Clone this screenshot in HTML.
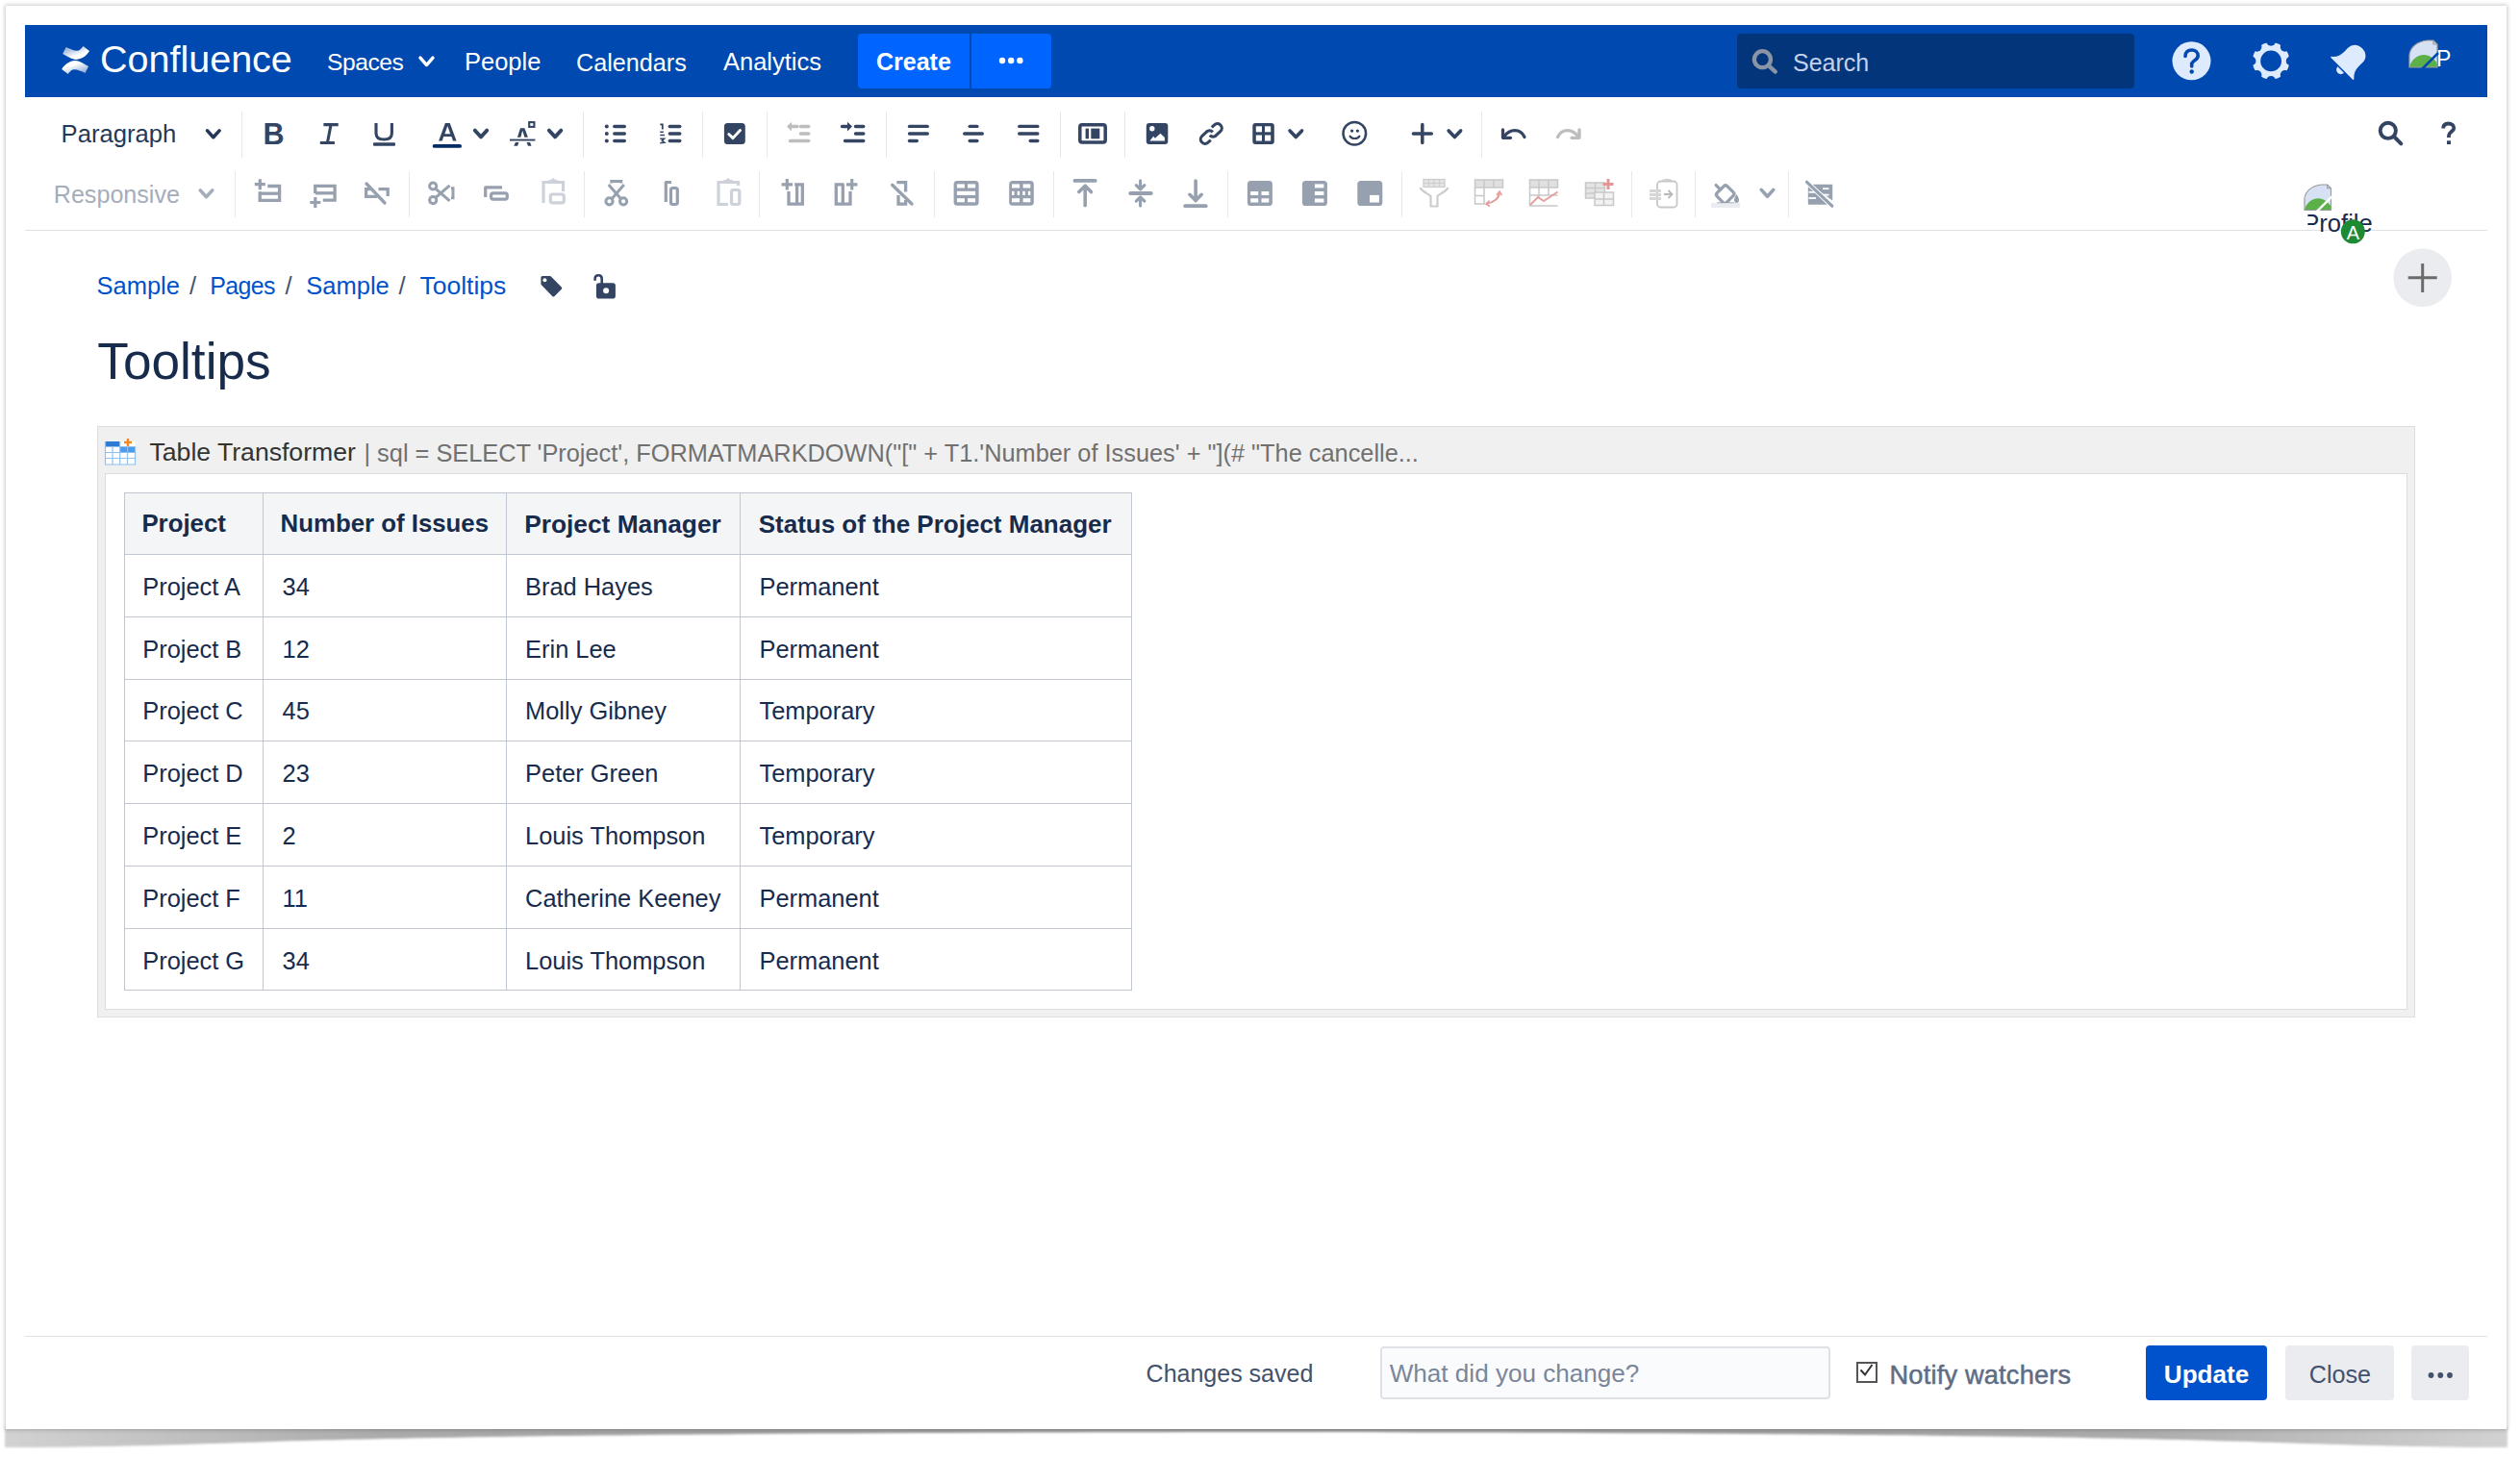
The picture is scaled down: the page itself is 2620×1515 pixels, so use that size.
<!DOCTYPE html>
<html><head><meta charset="utf-8"><title>Confluence - Tooltips</title>
<style>
html,body{margin:0;padding:0;background:#fff;width:2620px;height:1515px;overflow:hidden;font-family:"Liberation Sans",sans-serif}
.t{position:absolute;white-space:pre;line-height:1}
</style></head><body>
<svg style="position:absolute;left:0;top:0" width="2620" height="1515">
<defs>
<linearGradient id="shg" x1="0" x2="1" y1="0" y2="0">
<stop offset="0" stop-color="#d2d2d2"/><stop offset="0.15" stop-color="#ababab"/><stop offset="0.3" stop-color="#a0a0a0"/>
<stop offset="0.5" stop-color="#9c9c9c"/><stop offset="0.7" stop-color="#a0a0a0"/><stop offset="0.85" stop-color="#ababab"/><stop offset="1" stop-color="#d2d2d2"/></linearGradient>
<filter id="blur1" x="-1%" y="-50%" width="102%" height="200%"><feGaussianBlur stdDeviation="1.3"/></filter>
</defs>
<path d="M5,1484 L2607,1484 L2607,1505 C2560,1505 2480,1504 2370,1500 C2200,1494 1900,1490 1306,1489 C700,1490 420,1494 250,1500 C140,1504 60,1505 5,1505 Z" fill="url(#shg)" filter="url(#blur1)"/>
</svg>

<div style="position:absolute;left:6px;top:6px;width:2600px;height:1480px;background:#fff;box-shadow:0 0 4px 1px rgba(0,0,0,0.22);"></div>

<div style="position:absolute;left:26px;top:26px;width:2560px;height:75px;background:#0049B0"></div><div style="position:absolute;left:892px;top:35px;width:201px;height:57px;background:#0065FF;border-radius:4px"></div><div style="position:absolute;left:1008px;top:35px;width:2px;height:57px;background:#0049B0"></div><div style="position:absolute;left:1806px;top:35px;width:413px;height:57px;background:#03357B;border-radius:4px"></div>
<div style="position:absolute;left:26px;top:239px;width:2560px;height:1px;background:#DFE1E6"></div><div style="position:absolute;left:251px;top:116px;width:1px;height:48px;background:#E6E8EC"></div><div style="position:absolute;left:606px;top:116px;width:1px;height:48px;background:#E6E8EC"></div><div style="position:absolute;left:730px;top:116px;width:1px;height:48px;background:#E6E8EC"></div><div style="position:absolute;left:797px;top:116px;width:1px;height:48px;background:#E6E8EC"></div><div style="position:absolute;left:921px;top:116px;width:1px;height:48px;background:#E6E8EC"></div><div style="position:absolute;left:1102px;top:116px;width:1px;height:48px;background:#E6E8EC"></div><div style="position:absolute;left:1169px;top:116px;width:1px;height:48px;background:#E6E8EC"></div><div style="position:absolute;left:1540px;top:116px;width:1px;height:48px;background:#E6E8EC"></div><div style="position:absolute;left:244px;top:178px;width:1px;height:48px;background:#E6E8EC"></div><div style="position:absolute;left:425px;top:178px;width:1px;height:48px;background:#E6E8EC"></div><div style="position:absolute;left:607px;top:178px;width:1px;height:48px;background:#E6E8EC"></div><div style="position:absolute;left:789px;top:178px;width:1px;height:48px;background:#E6E8EC"></div><div style="position:absolute;left:971px;top:178px;width:1px;height:48px;background:#E6E8EC"></div><div style="position:absolute;left:1095px;top:178px;width:1px;height:48px;background:#E6E8EC"></div><div style="position:absolute;left:1276px;top:178px;width:1px;height:48px;background:#E6E8EC"></div><div style="position:absolute;left:1457px;top:178px;width:1px;height:48px;background:#E6E8EC"></div><div style="position:absolute;left:1696px;top:178px;width:1px;height:48px;background:#E6E8EC"></div><div style="position:absolute;left:1762px;top:178px;width:1px;height:48px;background:#E6E8EC"></div><div style="position:absolute;left:1859px;top:178px;width:1px;height:48px;background:#E6E8EC"></div>
<div style="position:absolute;left:101px;top:443px;width:2408px;height:613px;background:#F0F0F0;border:1px solid #DDDDDD"></div><div style="position:absolute;left:109px;top:492px;width:2392px;height:556px;background:#fff;border:1px solid #DDDDDD"></div>
<div style="position:absolute;left:129px;top:511.5px;width:1048px;height:65px;background:#F4F5F7"></div><div style="position:absolute;left:129.0px;top:511.5px;width:1.3px;height:518.5px;background:#C1C7D0"></div><div style="position:absolute;left:272.8px;top:511.5px;width:1.3px;height:518.5px;background:#C1C7D0"></div><div style="position:absolute;left:525.8px;top:511.5px;width:1.3px;height:518.5px;background:#C1C7D0"></div><div style="position:absolute;left:768.7px;top:511.5px;width:1.3px;height:518.5px;background:#C1C7D0"></div><div style="position:absolute;left:1175.7px;top:511.5px;width:1.3px;height:518.5px;background:#C1C7D0"></div><div style="position:absolute;left:129px;top:511.5px;width:1048px;height:1.3px;background:#C1C7D0"></div><div style="position:absolute;left:129px;top:576.1px;width:1048px;height:1.3px;background:#C1C7D0"></div><div style="position:absolute;left:129px;top:640.8px;width:1048px;height:1.3px;background:#C1C7D0"></div><div style="position:absolute;left:129px;top:705.5px;width:1048px;height:1.3px;background:#C1C7D0"></div><div style="position:absolute;left:129px;top:770.1px;width:1048px;height:1.3px;background:#C1C7D0"></div><div style="position:absolute;left:129px;top:834.8px;width:1048px;height:1.3px;background:#C1C7D0"></div><div style="position:absolute;left:129px;top:900.0px;width:1048px;height:1.3px;background:#C1C7D0"></div><div style="position:absolute;left:129px;top:964.7px;width:1048px;height:1.3px;background:#C1C7D0"></div><div style="position:absolute;left:129px;top:1029.0px;width:1048px;height:1.3px;background:#C1C7D0"></div>
<div style="position:absolute;left:26px;top:1389px;width:2560px;height:1.3px;background:#DFE1E6"></div><div style="position:absolute;left:1435px;top:1399.5px;width:463.5px;height:51.5px;background:#FAFBFC;border:2px solid #DFE1E6;border-radius:4px"></div><div style="position:absolute;left:1930px;top:1416px;width:17.5px;height:17.5px;border:2px solid #555;background:#fff"></div><div style="position:absolute;left:2231px;top:1399px;width:126px;height:56.5px;background:#0052CC;border-radius:4px"></div><div style="position:absolute;left:2376px;top:1399px;width:113px;height:56.5px;background:#EBECF0;border-radius:4px"></div><div style="position:absolute;left:2507px;top:1399px;width:60px;height:56.5px;background:#EBECF0;border-radius:4px"></div>
<div class="t" style="left:104.0px;top:42.4px;font-size:39.5px;color:#fff;font-weight:400;font-family:'Liberation Sans', sans-serif;">Confluence</div><div class="t" style="left:340.0px;top:53.1px;font-size:24.6px;color:#fff;font-weight:400;font-family:'Liberation Sans', sans-serif;letter-spacing:-0.45px">Spaces</div><div class="t" style="left:483.0px;top:52.3px;font-size:25.5px;color:#fff;font-weight:400;font-family:'Liberation Sans', sans-serif;">People</div><div class="t" style="left:599.0px;top:52.6px;font-size:25.2px;color:#fff;font-weight:400;font-family:'Liberation Sans', sans-serif;">Calendars</div><div class="t" style="left:752.0px;top:52.3px;font-size:25.5px;color:#fff;font-weight:400;font-family:'Liberation Sans', sans-serif;">Analytics</div><div class="t" style="left:911.0px;top:51.8px;font-size:25px;color:#fff;font-weight:700;font-family:'Liberation Sans', sans-serif;">Create</div><div class="t" style="left:1864.0px;top:52.8px;font-size:25px;color:#C3D2EC;font-weight:400;font-family:'Liberation Sans', sans-serif;">Search</div><div class="t" style="left:2533.0px;top:49.9px;font-size:23px;color:#fff;font-weight:400;font-family:'Liberation Sans', sans-serif;">P</div><div class="t" style="left:63.6px;top:127.2px;font-size:25.6px;color:#253858;font-weight:400;font-family:'Liberation Sans', sans-serif;">Paragraph</div><div class="t" style="left:55.8px;top:189.7px;font-size:25.1px;color:#A5ADBA;font-weight:400;font-family:'Liberation Sans', sans-serif;">Responsive</div><div class="t" style="left:2394.2px;top:219.8px;font-size:25.6px;color:#172B4D;font-weight:400;font-family:'Liberation Sans', sans-serif;clip-path:inset(0 0 0 5.2px)">Profile</div><div class="t" style="left:100.5px;top:284.7px;font-size:25.5px;color:#0052CC;font-weight:400;font-family:'Liberation Sans', sans-serif;">Sample</div><div class="t" style="left:197.0px;top:284.7px;font-size:25.5px;color:#42526E;font-weight:400;font-family:'Liberation Sans', sans-serif;">/</div><div class="t" style="left:218.3px;top:285.2px;font-size:24.9px;color:#0052CC;font-weight:400;font-family:'Liberation Sans', sans-serif;letter-spacing:-0.6px">Pages</div><div class="t" style="left:296.6px;top:284.7px;font-size:25.5px;color:#42526E;font-weight:400;font-family:'Liberation Sans', sans-serif;">/</div><div class="t" style="left:318.3px;top:284.7px;font-size:25.5px;color:#0052CC;font-weight:400;font-family:'Liberation Sans', sans-serif;">Sample</div><div class="t" style="left:414.6px;top:284.7px;font-size:25.5px;color:#42526E;font-weight:400;font-family:'Liberation Sans', sans-serif;">/</div><div class="t" style="left:436.5px;top:283.9px;font-size:26.5px;color:#0052CC;font-weight:400;font-family:'Liberation Sans', sans-serif;">Tooltips</div><div class="t" style="left:101.3px;top:348.8px;font-size:53.2px;color:#172B4D;font-weight:400;font-family:'Liberation Sans', sans-serif;">Tooltips</div><div class="t" style="left:155.5px;top:457.4px;font-size:26.6px;color:#333333;font-weight:400;font-family:'Liberation Sans', sans-serif;">Table Transformer</div><div class="t" style="left:378.5px;top:458.5px;font-size:25.35px;color:#707070;font-weight:400;font-family:'Liberation Sans', sans-serif;">| sql = SELECT 'Project', FORMATMARKDOWN("[" + T1.'Number of Issues' + "](# "The cancelle...</div><div class="t" style="left:147.4px;top:532.1px;font-size:25.8px;color:#172B4D;font-weight:700;font-family:'Liberation Sans', sans-serif;">Project</div><div class="t" style="left:291.6px;top:532.1px;font-size:25.8px;color:#172B4D;font-weight:700;font-family:'Liberation Sans', sans-serif;">Number of Issues</div><div class="t" style="left:545.2px;top:531.6px;font-size:26.3px;color:#172B4D;font-weight:700;font-family:'Liberation Sans', sans-serif;">Project Manager</div><div class="t" style="left:788.7px;top:531.9px;font-size:26.0px;color:#172B4D;font-weight:700;font-family:'Liberation Sans', sans-serif;">Status of the Project Manager</div><div class="t" style="left:148.3px;top:597.7px;font-size:25.4px;color:#172B4D;font-weight:400;font-family:'Liberation Sans', sans-serif;">Project A</div><div class="t" style="left:293.6px;top:597.7px;font-size:25.4px;color:#172B4D;font-weight:400;font-family:'Liberation Sans', sans-serif;">34</div><div class="t" style="left:546.1px;top:597.7px;font-size:25.4px;color:#172B4D;font-weight:400;font-family:'Liberation Sans', sans-serif;">Brad Hayes</div><div class="t" style="left:789.5px;top:597.7px;font-size:25.4px;color:#172B4D;font-weight:400;font-family:'Liberation Sans', sans-serif;">Permanent</div><div class="t" style="left:148.3px;top:662.5px;font-size:25.4px;color:#172B4D;font-weight:400;font-family:'Liberation Sans', sans-serif;">Project B</div><div class="t" style="left:293.6px;top:662.5px;font-size:25.4px;color:#172B4D;font-weight:400;font-family:'Liberation Sans', sans-serif;">12</div><div class="t" style="left:546.1px;top:662.5px;font-size:25.4px;color:#172B4D;font-weight:400;font-family:'Liberation Sans', sans-serif;">Erin Lee</div><div class="t" style="left:789.5px;top:662.5px;font-size:25.4px;color:#172B4D;font-weight:400;font-family:'Liberation Sans', sans-serif;">Permanent</div><div class="t" style="left:148.3px;top:727.3px;font-size:25.4px;color:#172B4D;font-weight:400;font-family:'Liberation Sans', sans-serif;">Project C</div><div class="t" style="left:293.6px;top:727.3px;font-size:25.4px;color:#172B4D;font-weight:400;font-family:'Liberation Sans', sans-serif;">45</div><div class="t" style="left:546.1px;top:727.3px;font-size:25.4px;color:#172B4D;font-weight:400;font-family:'Liberation Sans', sans-serif;">Molly Gibney</div><div class="t" style="left:789.5px;top:727.3px;font-size:25.4px;color:#172B4D;font-weight:400;font-family:'Liberation Sans', sans-serif;">Temporary</div><div class="t" style="left:148.3px;top:792.1px;font-size:25.4px;color:#172B4D;font-weight:400;font-family:'Liberation Sans', sans-serif;">Project D</div><div class="t" style="left:293.6px;top:792.1px;font-size:25.4px;color:#172B4D;font-weight:400;font-family:'Liberation Sans', sans-serif;">23</div><div class="t" style="left:546.1px;top:792.1px;font-size:25.4px;color:#172B4D;font-weight:400;font-family:'Liberation Sans', sans-serif;">Peter Green</div><div class="t" style="left:789.5px;top:792.1px;font-size:25.4px;color:#172B4D;font-weight:400;font-family:'Liberation Sans', sans-serif;">Temporary</div><div class="t" style="left:148.3px;top:856.9px;font-size:25.4px;color:#172B4D;font-weight:400;font-family:'Liberation Sans', sans-serif;">Project E</div><div class="t" style="left:293.6px;top:856.9px;font-size:25.4px;color:#172B4D;font-weight:400;font-family:'Liberation Sans', sans-serif;">2</div><div class="t" style="left:546.1px;top:856.9px;font-size:25.4px;color:#172B4D;font-weight:400;font-family:'Liberation Sans', sans-serif;">Louis Thompson</div><div class="t" style="left:789.5px;top:856.9px;font-size:25.4px;color:#172B4D;font-weight:400;font-family:'Liberation Sans', sans-serif;">Temporary</div><div class="t" style="left:148.3px;top:921.7px;font-size:25.4px;color:#172B4D;font-weight:400;font-family:'Liberation Sans', sans-serif;">Project F</div><div class="t" style="left:293.6px;top:921.7px;font-size:25.4px;color:#172B4D;font-weight:400;font-family:'Liberation Sans', sans-serif;">11</div><div class="t" style="left:546.1px;top:921.7px;font-size:25.4px;color:#172B4D;font-weight:400;font-family:'Liberation Sans', sans-serif;">Catherine Keeney</div><div class="t" style="left:789.5px;top:921.7px;font-size:25.4px;color:#172B4D;font-weight:400;font-family:'Liberation Sans', sans-serif;">Permanent</div><div class="t" style="left:148.3px;top:986.5px;font-size:25.4px;color:#172B4D;font-weight:400;font-family:'Liberation Sans', sans-serif;">Project G</div><div class="t" style="left:293.6px;top:986.5px;font-size:25.4px;color:#172B4D;font-weight:400;font-family:'Liberation Sans', sans-serif;">34</div><div class="t" style="left:546.1px;top:986.5px;font-size:25.4px;color:#172B4D;font-weight:400;font-family:'Liberation Sans', sans-serif;">Louis Thompson</div><div class="t" style="left:789.5px;top:986.5px;font-size:25.4px;color:#172B4D;font-weight:400;font-family:'Liberation Sans', sans-serif;">Permanent</div><div class="t" style="left:1191.6px;top:1416.0px;font-size:25px;color:#42526E;font-weight:400;font-family:'Liberation Sans', sans-serif;">Changes saved</div><div class="t" style="left:1444.7px;top:1415.4px;font-size:26.1px;color:#7A869A;font-weight:400;font-family:'Liberation Sans', sans-serif;">What did you change?</div><div class="t" style="left:1964.5px;top:1415.8px;font-size:27.2px;color:#5E6C84;font-weight:400;font-family:'Liberation Sans', sans-serif;letter-spacing:0.2px;-webkit-text-stroke:0.5px #5E6C84">Notify watchers</div><div class="t" style="left:2249.8px;top:1415.8px;font-size:26.1px;color:#fff;font-weight:700;font-family:'Liberation Sans', sans-serif;">Update</div><div class="t" style="left:2400.7px;top:1416.6px;font-size:25.2px;color:#42526E;font-weight:400;font-family:'Liberation Sans', sans-serif;">Close</div>
<svg style="position:absolute;left:0;top:0" width="2620" height="1515">
<g transform="translate(55,40)">
<defs>
<linearGradient id="lg1" x1="0.1" y1="0.1" x2="0.7" y2="0.9"><stop offset="0" stop-color="#8aa8d8"/><stop offset="0.75" stop-color="#ffffff"/></linearGradient>
<linearGradient id="lg2" x1="0.9" y1="0.9" x2="0.3" y2="0.1"><stop offset="0" stop-color="#8aa8d8"/><stop offset="0.75" stop-color="#ffffff"/></linearGradient>
</defs>
<path d="M13.6,9 C18,11 22,13 25.6,12.7 C28,12.5 30,10 31.5,8 L38,13 C35,18 30,21.5 24.1,21.9 C20,22 15,18.5 10.2,16 Z" fill="url(#lg1)"/>
<path d="M13.6,9 C18,11 22,13 25.6,12.7 C28,12.5 30,10 31.5,8 L38,13 C35,18 30,21.5 24.1,21.9 C20,22 15,18.5 10.2,16 Z" fill="url(#lg1)" transform="rotate(180 23.6 22.5)"/>
</g><path d="M437.0,60.05 L443.5,67.55 L450.0,60.05" fill="none" stroke="#fff" stroke-width="3.4" stroke-linecap="round" stroke-linejoin="round"/><circle cx="1042" cy="63" r="3.2" fill="#fff"/><circle cx="1051.2" cy="63" r="3.2" fill="#fff"/><circle cx="1060.4" cy="63" r="3.2" fill="#fff"/><circle cx="1832.4" cy="61.7" r="8.5" fill="none" stroke="#8A94A6" stroke-width="4.3"/><path d="M1839.5,68.8 L1845.8,74.6" stroke="#8A94A6" stroke-width="4.3" stroke-linecap="round"/><circle cx="2278.5" cy="63.3" r="20" fill="#DEEBFF"/><path d="M2272,58.5 C2272,54.2 2275,52 2278.6,52 C2282.3,52 2285.2,54.5 2285.2,58 C2285.2,62 2280.5,62.5 2278.7,66 L2278.7,69" fill="none" stroke="#0049B0" stroke-width="3.6" stroke-linecap="round"/><circle cx="2278.7" cy="74.5" r="2.2" fill="#0049B0"/><circle cx="2361.1" cy="63.4" r="19.3" fill="#DEEBFF"/><circle cx="2361.10" cy="42.80" r="4.9" fill="#0049B0"/><circle cx="2375.67" cy="48.83" r="4.9" fill="#0049B0"/><circle cx="2381.70" cy="63.40" r="4.9" fill="#0049B0"/><circle cx="2375.67" cy="77.97" r="4.9" fill="#0049B0"/><circle cx="2361.10" cy="84.00" r="4.9" fill="#0049B0"/><circle cx="2346.53" cy="77.97" r="4.9" fill="#0049B0"/><circle cx="2340.50" cy="63.40" r="4.9" fill="#0049B0"/><circle cx="2346.53" cy="48.83" r="4.9" fill="#0049B0"/><circle cx="2361.1" cy="63.4" r="10.9" fill="#0049B0"/><g transform="translate(2445.2,61) rotate(45)">
<path d="M-16,14 C-11,10 -10,6 -10,0 L-10,-5 C-10,-11 -5.5,-14.5 0,-14.5 C5.5,-14.5 10,-11 10,-5 L10,0 C10,6 11,10 16,14 Z" fill="#DEEBFF" stroke="#DEEBFF" stroke-width="1.5" stroke-linejoin="round"/>
<path d="M-4.6,16.3 A4.6,4.6 0 0 0 4.6,16.3 Z" fill="#DEEBFF"/>
</g><g transform="translate(2504,41) scale(1.0)">
<path d="M1,29 L1,16 C2,8 9,2 20,1 L26,1 L30,5 L30,29 Z" fill="#d6e2f4"/>
<path d="M1,29 C3,20 10,16 16,16 C22,16 27,20 30,25 L30,29 Z" fill="#5cb048"/>
<path d="M1,29 L1,16 C2,8 9,2 20,1 L26,1 L30,5 L30,29 Z" fill="none" stroke="#9a9a9a" stroke-width="1.2"/>
<path d="M26,1 L26,5 L30,5" fill="none" stroke="#9a9a9a" stroke-width="1.2"/>
<path d="M14,31 L31,14" stroke="#0049B0" stroke-width="2.5"/>
</g><path d="M215.55,135.9 L221.8,142.70000000000002 L228.05,135.9" fill="none" stroke="#253858" stroke-width="3.6" stroke-linecap="round" stroke-linejoin="round"/><path d="M208.25,197.9 L214.5,204.70000000000002 L220.75,197.9" fill="none" stroke="#A5ADBA" stroke-width="3.6" stroke-linecap="round" stroke-linejoin="round"/><text x="273.5" y="149.9" font-family="Liberation Sans" font-weight="700" font-size="30.5" fill="#344563">B</text><path d="M336.4,129.6 L351.7,129.6 M332.8,148.5 L347.9,148.5 M344,130 L340.5,148" fill="none" stroke="#344563" stroke-width="3.1"/><path d="M391,128 L391,138.5 C391,143.5 394.5,145 399.2,145 C404,145 407.4,143.5 407.4,138.5 L407.4,128" fill="none" stroke="#344563" stroke-width="3.1"/><rect x="388" y="148.2" width="23" height="3.6" rx="1" fill="#344563"/><path d="M456.1,146.6 L462.9,128 L467.7,128 L474.6,146.6 L471,146.6 L469.4,142 L461.2,142 L459.7,146.6 Z M462.4,139.2 L468.2,139.2 L465.3,131 Z" fill="#344563" fill-rule="evenodd"/><rect x="449.7" y="149.9" width="30.3" height="3.9" rx="1.9" fill="#002C66"/><path d="M493.75,135.6 L500,142.4 L506.25,135.6" fill="none" stroke="#344563" stroke-width="3.8" stroke-linecap="round" stroke-linejoin="round"/><path d="M537.9,142.7 L541,133.2 L545.4,133.2 L548.9,142.7 L545.4,142.7 L543.2,135.8 L541.4,142.7 Z" fill="#344563"/><path d="M534.3,151.8 L535.9,148 L539.4,148 L538.1,151.8 Z M547.6,148 L551.1,148 L552.5,151.8 L549,151.8 Z" fill="#344563"/><rect x="530" y="144.6" width="26.4" height="1.9" fill="#344563"/><rect x="550.2" y="127.1" width="5.2" height="4.8" fill="none" stroke="#344563" stroke-width="2.1"/><path d="M570.85,135.6 L577.1,142.4 L583.35,135.6" fill="none" stroke="#344563" stroke-width="3.8" stroke-linecap="round" stroke-linejoin="round"/><circle cx="630.8" cy="131.5" r="2" fill="#344563"/><path d="M638.8,131.5 L649.3,131.5" stroke="#344563" stroke-width="3.4" stroke-linecap="round"/><circle cx="630.8" cy="139" r="2" fill="#344563"/><path d="M638.8,139 L649.3,139" stroke="#344563" stroke-width="3.4" stroke-linecap="round"/><circle cx="630.8" cy="146.5" r="2" fill="#344563"/><path d="M638.8,146.5 L649.3,146.5" stroke="#344563" stroke-width="3.4" stroke-linecap="round"/><path d="M696.3,131.5 L706.8,131.5" stroke="#344563" stroke-width="3.4" stroke-linecap="round"/><path d="M696.3,139 L706.8,139" stroke="#344563" stroke-width="3.4" stroke-linecap="round"/><path d="M696.3,146.5 L706.8,146.5" stroke="#344563" stroke-width="3.4" stroke-linecap="round"/><path d="M686.3,129.4 L688.8,129.4 L688.8,134.5" fill="none" stroke="#344563" stroke-width="1.8"/><path d="M686.3,137.3 L689.8,137.3 M686.3,140.5 L691,140.5" fill="none" stroke="#344563" stroke-width="1.6"/><path d="M686.3,144.2 L690.5,144.2 L688.3,146.3 L690.8,148.2 L686.3,148.8" fill="none" stroke="#344563" stroke-width="1.6"/><rect x="752.9" y="128" width="21.9" height="22" rx="3.5" fill="#344563"/><path d="M757.8,139.5 L762,143.6 L769.5,135.6" fill="none" stroke="#fff" stroke-width="2.9" stroke-linecap="round" stroke-linejoin="round"/><path d="M832.5,131.5 L840.8,131.5 M832.5,139 L840.8,139 M821.5,146.5 L840.8,146.5 M829,131.5 L821,131.5" stroke="#BDBDBD" stroke-width="3.4" stroke-linecap="round"/><path d="M818,131.6 L823,126.8 L823,136.4 Z" fill="#BDBDBD"/><path d="M889.5,131.5 L897.8,131.5 M889.5,139 L897.8,139 M878.5,146.5 L897.8,146.5 M875.5,131.5 L882,131.5" stroke="#344563" stroke-width="3.4" stroke-linecap="round"/><path d="M886,131.6 L881,126.8 L881,136.4 Z" fill="#344563"/><path d="M945.5,131.4 L964.3,131.4" stroke="#344563" stroke-width="3.4" stroke-linecap="round"/><path d="M945.5,139 L964.3,139" stroke="#344563" stroke-width="3.4" stroke-linecap="round"/><path d="M945.5,146.5 L953.3,146.5" stroke="#344563" stroke-width="3.4" stroke-linecap="round"/><path d="M1008.2,131.4 L1015.9,131.4" stroke="#344563" stroke-width="3.4" stroke-linecap="round"/><path d="M1002.7,139 L1021.3,139" stroke="#344563" stroke-width="3.4" stroke-linecap="round"/><path d="M1008.2,146.5 L1015.9,146.5" stroke="#344563" stroke-width="3.4" stroke-linecap="round"/><path d="M1059.7,131.4 L1078.8,131.4" stroke="#344563" stroke-width="3.4" stroke-linecap="round"/><path d="M1059.7,139 L1078.8,139" stroke="#344563" stroke-width="3.4" stroke-linecap="round"/><path d="M1071.2,146.5 L1078.8,146.5" stroke="#344563" stroke-width="3.4" stroke-linecap="round"/><rect x="1122.8" y="129.8" width="26.4" height="18.2" rx="2.2" fill="none" stroke="#344563" stroke-width="3.5"/><rect x="1128.6" y="133.6" width="3.4" height="10.7" fill="#344563"/><rect x="1134.3" y="133.6" width="9" height="10.7" fill="#344563"/><rect x="1191.8" y="127.9" width="22.5" height="22.1" rx="3" fill="#344563"/><circle cx="1197.8" cy="133.7" r="2.7" fill="#fff"/><path d="M1195.4,146.6 L1199.2,141.8 L1200.9,143.8 L1206.4,138.8 L1210.9,143 L1210.9,146.6 Z" fill="#fff"/><g transform="translate(1259.3,139) rotate(-42)"><path d="M-4.8,4.6 L-8.6,4.6 A4.6,4.6 0 0 1 -8.6,-4.6 L-1.2,-4.6 A4.6,4.6 0 0 1 2.2,-0.2" fill="none" stroke="#344563" stroke-width="3.1" stroke-linecap="butt"/><path d="M-4.8,4.6 L-8.6,4.6 A4.6,4.6 0 0 1 -8.6,-4.6 L-1.2,-4.6 A4.6,4.6 0 0 1 2.2,-0.2" fill="none" stroke="#344563" stroke-width="3.1" transform="rotate(180)"/></g><rect x="1302.3" y="127.9" width="22.5" height="22.1" rx="3" fill="#344563"/><rect x="1305.8" y="131.3" width="6.2" height="6" fill="#fff"/><rect x="1315" y="131.3" width="6.2" height="6" fill="#fff"/><rect x="1305.8" y="140.5" width="6.2" height="6" fill="#fff"/><rect x="1315" y="140.5" width="6.2" height="6" fill="#fff"/><path d="M1341.05,135.89999999999998 L1347.3,142.5 L1353.55,135.89999999999998" fill="none" stroke="#344563" stroke-width="3.6" stroke-linecap="round" stroke-linejoin="round"/><circle cx="1408.3" cy="138.8" r="11.8" fill="none" stroke="#344563" stroke-width="2.5"/><circle cx="1405.6" cy="136.1" r="1.7" fill="#344563"/><circle cx="1411.4" cy="136.1" r="1.7" fill="#344563"/><path d="M1403.6,141.6 C1405.5,144.8 1411.5,144.8 1413.4,141.6" fill="none" stroke="#344563" stroke-width="2.2" stroke-linecap="round"/><path d="M1478.8,129.5 L1478.8,148.5 M1469.4,139 L1488.3,139" stroke="#344563" stroke-width="3.5" stroke-linecap="round"/><path d="M1506.15,135.89999999999998 L1512.4,142.5 L1518.65,135.89999999999998" fill="none" stroke="#344563" stroke-width="3.6" stroke-linecap="round" stroke-linejoin="round"/><path d="M1562.5,135 L1562.5,143.3 L1570.5,143.3" fill="none" stroke="#344563" stroke-width="3.3" stroke-linecap="round" stroke-linejoin="round"/><path d="M1564,141.8 C1569.5,134 1580.5,133 1585,142.5" fill="none" stroke="#344563" stroke-width="3.2" stroke-linecap="round"/><path d="M1642,135 L1642,143.3 L1634,143.3" fill="none" stroke="#BDBDBD" stroke-width="3.3" stroke-linecap="round" stroke-linejoin="round"/><path d="M1640.5,141.8 C1635,134 1624,133 1619.5,142.5" fill="none" stroke="#BDBDBD" stroke-width="3.2" stroke-linecap="round"/><circle cx="2482.8" cy="135.8" r="8.1" fill="none" stroke="#344563" stroke-width="3.9"/><path d="M2489,142 L2496.3,149.3" stroke="#344563" stroke-width="4" stroke-linecap="round"/><path d="M2540.2,133.5 C2540.2,130 2542.5,128.5 2545.6,128.5 C2548.8,128.5 2551.3,130.5 2551.3,133.2 C2551.3,136.5 2546,137 2546,141 L2546,143" fill="none" stroke="#344563" stroke-width="3.8"/><rect x="2544" y="146.3" width="4" height="3.8" fill="#344563"/><path d="M270.3,186.2 L270.3,197.2 M264.8,191.7 L275.8,191.7" stroke="#97A0AF" stroke-width="3.2"/><path d="M278.3,193.5 L290.6,193.5 L290.6,208.39999999999998 L270.2,208.39999999999998 L270.2,199.2" fill="none" stroke="#97A0AF" stroke-width="3.3"/><path d="M270.2,201.2 L290.6,201.2" stroke="#97A0AF" stroke-width="3.3"/><path d="M327.8,205 L327.8,216 M322.3,210.5 L333.3,210.5" stroke="#97A0AF" stroke-width="3.2"/><path d="M327.7,201 L327.7,193.3 L348.1,193.3 L348.1,208.2 L335.8,208.2" fill="none" stroke="#97A0AF" stroke-width="3.3"/><path d="M327.7,200.8 L348.1,200.8" stroke="#97A0AF" stroke-width="3.3"/><path d="M385,196.7 L380.6,196.7 L380.6,204.3 L392,204.3 M393.5,196.7 L403.2,196.7 L403.2,204" fill="none" stroke="#97A0AF" stroke-width="3.3"/><path d="M381,191 L400,211" stroke="#97A0AF" stroke-width="3.3" stroke-linecap="round"/><g transform="translate(458.5,200.8) rotate(0)">
<circle cx="-8.3" cy="-7.3" r="3.6" fill="none" stroke="#97A0AF" stroke-width="3"/>
<circle cx="-8.3" cy="7.3" r="3.6" fill="none" stroke="#97A0AF" stroke-width="3"/>
<path d="M-5.5,-4.5 L9,8 M-5.5,4.5 L9,-8" stroke="#97A0AF" stroke-width="3"/>
<path d="M10.5,-5 L12.5,-5 L12.5,5 L10.5,5" fill="none" stroke="#97A0AF" stroke-width="3"/>
</g><path d="M504.7,205 L504.7,194.8 L522,194.8" fill="none" stroke="#97A0AF" stroke-width="3.2" stroke-linejoin="round"/><rect x="510.6" y="200.8" width="16.7" height="6.3" rx="2" fill="none" stroke="#97A0AF" stroke-width="3.2"/><path d="M565,211 L565,189.5 L585.5,189.5 L585.5,199" fill="none" stroke="#CDD2DA" stroke-width="3.2"/><rect x="570" y="187" width="10" height="4" rx="1" fill="#CDD2DA"/><rect x="573" y="185.3" width="4" height="4" rx="2" fill="#CDD2DA"/><rect x="572.3" y="202" width="14" height="8.8" rx="2" fill="none" stroke="#CDD2DA" stroke-width="3.2"/><g transform="translate(640.8,201) rotate(-90)">
<circle cx="-8.3" cy="-7.3" r="3.6" fill="none" stroke="#97A0AF" stroke-width="3"/>
<circle cx="-8.3" cy="7.3" r="3.6" fill="none" stroke="#97A0AF" stroke-width="3"/>
<path d="M-5.5,-4.5 L9,8 M-5.5,4.5 L9,-8" stroke="#97A0AF" stroke-width="3"/>
<path d="M10.5,-5 L12.5,-5 L12.5,5 L10.5,5" fill="none" stroke="#97A0AF" stroke-width="3"/>
</g><path d="M692.3,210 L692.3,189.5 L698,189.5" fill="none" stroke="#97A0AF" stroke-width="3.2" stroke-linejoin="round"/><rect x="697.5" y="195.5" width="6.8" height="17" rx="2" fill="none" stroke="#97A0AF" stroke-width="3.2"/><path d="M757,212.5 L747,212.5 L747,189.5 L767.5,189.5 L767.5,193" fill="none" stroke="#CDD2DA" stroke-width="3.2"/><rect x="752" y="187" width="10" height="4" rx="1" fill="#CDD2DA"/><rect x="755" y="185.3" width="4" height="4" rx="2" fill="#CDD2DA"/><rect x="760.5" y="197.5" width="8.3" height="15" rx="2" fill="none" stroke="#CDD2DA" stroke-width="3.2"/><path d="M818.3,186 L818.3,197.5 M812.5,191.8 L824,191.8" stroke="#97A0AF" stroke-width="3.2"/><path d="M826.2,191.8 L834.3,191.8 L834.3,212.2 L820,212.2 L820,199" fill="none" stroke="#97A0AF" stroke-width="3.3"/><path d="M828.6,191.8 L828.6,212.2" stroke="#97A0AF" stroke-width="3.3"/><path d="M885.7,186 L885.7,197.5 M880,191.8 L891.5,191.8" stroke="#97A0AF" stroke-width="3.2"/><path d="M877.6,191.8 L869.3,191.8 L869.3,212.2 L884,212.2 L884,199" fill="none" stroke="#97A0AF" stroke-width="3.3"/><path d="M876.3,191.8 L876.3,212.2" stroke="#97A0AF" stroke-width="3.3"/><path d="M932.3,189.6 L941.6,189.6 L941.6,199.5 M934,203 L934,212.2 L941.6,212.2 L941.6,208" fill="none" stroke="#97A0AF" stroke-width="3.3"/><path d="M927.6,192.3 L948,212" stroke="#97A0AF" stroke-width="3.3" stroke-linecap="round"/><rect x="991.6" y="188.1" width="26" height="25.7" rx="3.6" fill="#97A0AF"/><rect x="994.9" y="191.4" width="8.0" height="4.1" fill="#fff"/><rect x="1006" y="191.4" width="8.1" height="4.1" fill="#fff"/><rect x="994.9" y="198.8" width="19.2" height="4.1" fill="#fff"/><rect x="994.9" y="206.2" width="8.0" height="4.1" fill="#fff"/><rect x="1006" y="206.2" width="8.1" height="4.1" fill="#fff"/><rect x="1049.2" y="188.1" width="25.6" height="25.7" rx="3.6" fill="#97A0AF"/><rect x="1052" y="191.4" width="8.1" height="4.1" fill="#fff"/><rect x="1063.6" y="191.4" width="7.7" height="4.1" fill="#fff"/><rect x="1052" y="198.8" width="2.5" height="4.1" fill="#fff"/><rect x="1057.7" y="198.8" width="2.4" height="4.1" fill="#fff"/><rect x="1063.2" y="198.8" width="2.6" height="4.1" fill="#fff"/><rect x="1068.9" y="198.8" width="2.4" height="4.1" fill="#fff"/><rect x="1052" y="206.2" width="8.1" height="4.1" fill="#fff"/><rect x="1063.6" y="206.2" width="7.7" height="4.1" fill="#fff"/><path d="M1117.4,187.9 L1138.7,187.9" stroke="#97A0AF" stroke-width="3.8" stroke-linecap="round"/><path d="M1128.2,193.5 L1128.2,213.8 M1121.8,199.6 L1128.2,193.2 L1134.4,199.6" fill="none" stroke="#97A0AF" stroke-width="3.6" stroke-linecap="round" stroke-linejoin="round"/><path d="M1175.2,201 L1196.8,201" stroke="#97A0AF" stroke-width="3.8" stroke-linecap="round"/><path d="M1185.6,187.8 L1185.6,196.5 M1181.3,192.6 L1185.6,196.9 L1189.9,192.6 M1185.6,214 L1185.6,205.3 M1181.3,209.2 L1185.6,204.9 L1189.9,209.2" fill="none" stroke="#97A0AF" stroke-width="3.1" stroke-linecap="round" stroke-linejoin="round"/><path d="M1232.2,214.2 L1253.7,214.2" stroke="#97A0AF" stroke-width="3.8" stroke-linecap="round"/><path d="M1243.1,188 L1243.1,208.3 M1236.9,202.3 L1243.1,208.6 L1249.2,202.3" fill="none" stroke="#97A0AF" stroke-width="3.6" stroke-linecap="round" stroke-linejoin="round"/><rect x="1296.9" y="187.9" width="26" height="26.1" rx="3.6" fill="#97A0AF"/><rect x="1300.2" y="199" width="8.0" height="4.0" fill="#fff"/><rect x="1311.5" y="199" width="7.8" height="4.0" fill="#fff"/><rect x="1300.2" y="206.3" width="8.0" height="4.2" fill="#fff"/><rect x="1311.5" y="206.3" width="7.8" height="4.2" fill="#fff"/><rect x="1353.9" y="187.9" width="26" height="26.1" rx="3.6" fill="#97A0AF"/><rect x="1366.9" y="191.4" width="9.5" height="4.0" fill="#fff"/><rect x="1366.9" y="199" width="9.5" height="4.0" fill="#fff"/><rect x="1366.9" y="206.5" width="9.5" height="4.0" fill="#fff"/><rect x="1411.3" y="187.9" width="26" height="26.1" rx="3.6" fill="#97A0AF"/><rect x="1424" y="202.9" width="9.9" height="7.6" fill="#fff"/><g opacity="0.9">
<rect x="1480" y="186.5" width="22" height="8" fill="#e2e2e2" stroke="#C8C8C8" stroke-width="1.3"/>
<path d="M1485.5,186.5 L1485.5,194.5 M1491,186.5 L1491,194.5 M1496.5,186.5 L1496.5,194.5 M1480,190.5 L1502,190.5" stroke="#C8C8C8" stroke-width="1.2"/>
<path d="M1476.5,195 C1478,199 1486,202 1487.5,204 L1487.5,214.5 L1494.5,214.5 L1494.5,204 C1496,202 1504,199 1505.5,195" fill="none" stroke="#C8C8C8" stroke-width="2.2"/>
</g><g>
<rect x="1533.5" y="187" width="29" height="8" fill="#e0e0e0" stroke="#C8C8C8" stroke-width="1.5"/>
<path d="M1543,187 L1543,195 M1553,187 L1553,195" stroke="#C8C8C8" stroke-width="1.5"/>
<path d="M1533.5,195 L1533.5,212 L1544,212 M1533.5,203.5 L1543,203.5 M1543,195 L1543,212" fill="none" stroke="#C8C8C8" stroke-width="1.5"/>
<path d="M1545.5,211.5 C1552,211 1558,207 1559,201" fill="none" stroke="#E59A9A" stroke-width="1.8"/>
<path d="M1556,203 L1559,199 L1561.5,203" fill="none" stroke="#E59A9A" stroke-width="1.5"/>
<path d="M1548.5,208.5 L1545,212 L1549,214.5" fill="none" stroke="#E59A9A" stroke-width="1.5"/>
</g><g>
<rect x="1590.5" y="187" width="29" height="8" fill="#e0e0e0" stroke="#C8C8C8" stroke-width="1.5"/>
<path d="M1600,187 L1600,195 M1610,187 L1610,195 M1590.5,195 L1590.5,214 L1619.5,214 M1590.5,203 L1619.5,203 M1600,195 L1600,205 M1610,195 L1610,203" fill="none" stroke="#C8C8C8" stroke-width="1.5"/>
<path d="M1591,213 L1599,205 L1605,209 L1619.5,199.5" fill="none" stroke="#E7A0A0" stroke-width="2"/>
</g><g>
<rect x="1648.5" y="190" width="20" height="16" fill="#e4e4e4" stroke="#C8C8C8" stroke-width="1.5"/>
<path d="M1658.5,190 L1658.5,206 M1648.5,195.5 L1668.5,195.5 M1648.5,201 L1668.5,201" stroke="#C8C8C8" stroke-width="1.5"/>
<rect x="1658" y="200" width="19.5" height="13.5" fill="#f2f2f2" stroke="#C8C8C8" stroke-width="1.5"/>
<path d="M1667.5,200 L1667.5,213.5 M1658,207 L1677.5,207" stroke="#C8C8C8" stroke-width="1.5"/>
<path d="M1672,186 L1672,197 M1666.5,191.5 L1677.5,191.5" stroke="#E59595" stroke-width="3"/>
</g><g>
<rect x="1723" y="188.5" width="20.5" height="27" rx="3.5" fill="none" stroke="#C8C8C8" stroke-width="1.8"/>
<path d="M1728.5,188.5 C1729,186 1737,186 1738,188.5" fill="none" stroke="#C8C8C8" stroke-width="1.5"/>
<path d="M1715,198.5 L1727,198.5 M1715,202.5 L1727,202.5 M1715,206.5 L1727,206.5" stroke="#d6d6d6" stroke-width="2.8"/>
<path d="M1730,202 L1738,202 M1734.5,198 L1738.5,202 L1734.5,206" fill="none" stroke="#b9b9b9" stroke-width="1.8"/>
</g><g transform="translate(1794,201) rotate(-45)">
<rect x="-8.5" y="-6.5" width="15" height="14" rx="2.5" fill="none" stroke="#97A0AF" stroke-width="3.2"/>
<path d="M-1,-6.5 L-1,-13" stroke="#97A0AF" stroke-width="3.2" stroke-linecap="round"/>
</g><path d="M1805.5,202 C1803.5,205 1803,207 1803,208 C1803,210 1804.2,211 1805.5,211 C1806.8,211 1808,210 1808,208 C1808,207 1807.5,205 1805.5,202 Z" fill="#97A0AF"/><rect x="1779" y="211" width="30" height="5" fill="#EBECF0"/><rect x="1785" y="210.4" width="18" height="0.8" fill="#97A0AF"/><path d="M1831.25,197.4 L1837.5,204.20000000000002 L1843.75,197.4" fill="none" stroke="#97A0AF" stroke-width="3.6" stroke-linecap="round" stroke-linejoin="round"/><path d="M1880,192 L1905,192 L1905,208 L1897,208 M1880,192 L1880,212 L1893,212" fill="none" stroke="#97A0AF" stroke-width="0"/><path d="M1880,191.8 L1905.2,191.8 L1905.2,208.5 L1882,191.8 Z" fill="#97A0AF"/><path d="M1879.8,194 L1879.8,212.8 L1902,212.8 Z" fill="#97A0AF"/><path d="M1880.5,199.8 L1888,199.8" stroke="#fff" stroke-width="1.8"/><path d="M1880.5,206 L1888,206" stroke="#fff" stroke-width="1.8"/><path d="M1895,196.2 L1901.5,196.2" stroke="#fff" stroke-width="1.8"/><path d="M1895,202.6 L1901.5,202.6" stroke="#fff" stroke-width="1.8"/><path d="M1878.5,189.3 L1904.8,214.2" stroke="#fff" stroke-width="5"/><path d="M1878.5,189.3 L1904.8,214.2" stroke="#97A0AF" stroke-width="3.2" stroke-linecap="round"/><g transform="translate(2395,191) scale(0.95)">
<path d="M1,29 L1,16 C2,8 9,2 20,1 L26,1 L30,5 L30,29 Z" fill="#d6e2f4"/>
<path d="M1,29 C3,20 10,16 16,16 C22,16 27,20 30,25 L30,29 Z" fill="#5cb048"/>
<path d="M1,29 L1,16 C2,8 9,2 20,1 L26,1 L30,5 L30,29 Z" fill="none" stroke="#9a9a9a" stroke-width="1.2"/>
<path d="M26,1 L26,5 L30,5" fill="none" stroke="#9a9a9a" stroke-width="1.2"/>
<path d="M14,31 L31,14" stroke="#ffffff" stroke-width="2.5"/>
</g><circle cx="2446.3" cy="240.8" r="12.5" fill="#1F8A34"/><text x="2446.3" y="248.5" text-anchor="middle" font-family="Liberation Sans" font-size="20" fill="#fff">A</text><circle cx="2518.7" cy="288.8" r="30.3" fill="#EBECF0"/><path d="M2518.7,274 L2518.7,304 M2503.7,288.8 L2533.7,288.8" stroke="#6B6B6B" stroke-width="3"/><path d="M564,288.5 L571.5,288.5 L582.6,299.6 L575.4,306.9 L564,295.2 Z" fill="#344563" stroke="#344563" stroke-width="3.2" stroke-linejoin="round"/><circle cx="566.4" cy="291.3" r="2" fill="#fff"/><path d="M618.6,290.8 L618.6,290 C618.6,287.6 620.2,286.3 622.2,286.3 C624.2,286.3 625.7,287.8 625.7,290 L625.7,295" fill="none" stroke="#344563" stroke-width="2.6" stroke-linecap="round"/><rect x="619.9" y="294.2" width="20" height="16.3" rx="2.8" fill="#344563"/><circle cx="630.1" cy="302.2" r="3" fill="#fff"/><g>
<rect x="109.5" y="459" width="31" height="24" fill="#fff"/>
<rect x="109.5" y="459" width="15" height="5.5" fill="#2C7BD5"/>
<rect x="125" y="465" width="15.5" height="5" fill="#4C9BE8"/>
<path d="M109.5,470.5 L140.5,470.5 M109.5,476.5 L140.5,476.5 M117,464.5 L117,483 M124.7,459 L124.7,483 M132.5,464.5 L132.5,483 M109.5,464.5 L140.5,464.5 M109.5,459 L109.5,483 L140.5,483 L140.5,464.5" fill="none" stroke="#8EC0F0" stroke-width="1.2"/>
<path d="M133,456 L133,464 M129,460 L137,460" stroke="#F08A24" stroke-width="2.4"/>
</g><path d="M1934.5,1424.5 L1939,1429.5 L1946.5,1419" fill="none" stroke="#333" stroke-width="2"/><circle cx="2527.5" cy="1430" r="2.9" fill="#42526E"/><circle cx="2537.3" cy="1430" r="2.9" fill="#42526E"/><circle cx="2547" cy="1430" r="2.9" fill="#42526E"/>
</svg>
</body></html>
